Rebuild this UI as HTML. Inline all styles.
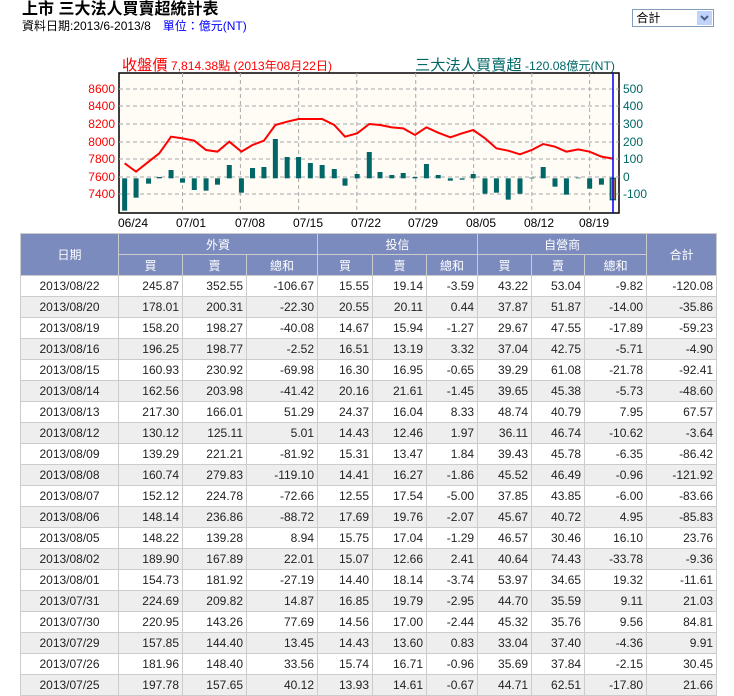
<!DOCTYPE html>
<html><head><meta charset="utf-8"><style>
body{margin:0;background:#fff;font-family:"Liberation Sans","Noto Sans CJK TC",sans-serif;width:734px;height:695px;overflow:hidden;position:relative}
.t{position:absolute;left:22px;top:0;font-size:16px;font-weight:bold;line-height:20px}
.s{position:absolute;left:22px;top:19px;font-size:12px;line-height:14px}
.s span{color:#00f;margin-left:12px}
.sel{position:absolute;left:632px;top:9px;width:80px;height:16px;border:1px solid #7f9db9;font-size:12px;line-height:16px}
.sel i{position:absolute;right:1px;top:1px;width:15px;height:14px;background:#c1d3fb;}
svg{position:absolute;left:0;top:0}
table{position:absolute;left:20px;top:233px;border-collapse:collapse;table-layout:fixed;width:697px;font-size:12px}
td,th{border:1px solid #ccc;height:20px;padding:0 3px;white-space:nowrap}
th{background:#7b8bbd;color:#fff;font-weight:normal;text-align:center}
td{text-align:right;color:#222}
td:first-child{text-align:center}
tr.g td{background:#eee}
</style></head><body>
<div class="t">上市 三大法人買賣超統計表</div>
<div class="s">資料日期:2013/6-2013/8<span>單位：億元(NT)</span></div>
<div class="sel">&nbsp;合計<i><svg width="15" height="14" style="position:static"><path d="M4 5l3.5 3.5L11 5" stroke="#4d6185" stroke-width="2" fill="none"/></svg></i></div>
<svg width="734" height="233" font-family="Liberation Sans,Noto Sans CJK TC,sans-serif">
<text x="122" y="70" fill="#f00" font-size="12" textLength="210" lengthAdjust="spacingAndGlyphs"><tspan font-size="15">收盤價</tspan> 7,814.38點 (2013年08月22日)</text>
<text x="415" y="70" fill="#006666" font-size="12" textLength="200" lengthAdjust="spacingAndGlyphs"><tspan font-size="15">三大法人買賣超</tspan> -120.08億元(NT)</text>
<rect x="119" y="73" width="500" height="140" fill="#fffbf5" stroke="#000" stroke-width="1.5"/>
<g stroke="#aaa" stroke-dasharray="4,3" stroke-width="1">
<line x1="119" x2="619" y1="89" y2="89"/><line x1="119" x2="619" y1="106" y2="106"/><line x1="119" x2="619" y1="124" y2="124"/><line x1="119" x2="619" y1="142" y2="142"/><line x1="119" x2="619" y1="159" y2="159"/><line x1="119" x2="619" y1="177" y2="177"/><line x1="119" x2="619" y1="194" y2="194"/>
<line x1="182.5" x2="182.5" y1="73" y2="213"/><line x1="240.4" x2="240.4" y1="73" y2="213"/><line x1="298.6" x2="298.6" y1="73" y2="213"/><line x1="356.8" x2="356.8" y1="73" y2="213"/><line x1="415.7" x2="415.7" y1="73" y2="213"/><line x1="473.6" x2="473.6" y1="73" y2="213"/><line x1="531.8" x2="531.8" y1="73" y2="213"/><line x1="589.6" x2="589.6" y1="73" y2="213"/>
</g>
<g fill="#f00" font-size="12" text-anchor="end">
<text x="115" y="93">8600</text><text x="115" y="110">8400</text><text x="115" y="128">8200</text><text x="115" y="146">8000</text><text x="115" y="163">7800</text><text x="115" y="181">7600</text><text x="115" y="198">7400</text></g>
<g fill="#006666" font-size="12">
<text x="623" y="93">500</text><text x="623" y="110">400</text><text x="623" y="128">300</text><text x="623" y="146">200</text><text x="623" y="163">100</text><text x="623" y="181">0</text><text x="623" y="198">-100</text></g>
<g fill="#000" font-size="12" text-anchor="middle">
<text x="133" y="227">06/24</text><text x="191" y="227">07/01</text><text x="250" y="227">07/08</text><text x="308" y="227">07/15</text><text x="366" y="227">07/22</text><text x="423" y="227">07/29</text><text x="481" y="227">08/05</text><text x="539" y="227">08/12</text><text x="594" y="227">08/19</text></g>
<g transform="translate(80,120) scale(0.35714,0.33333)" fill="#006666">
<rect x="118" y="175" width="14" height="97"/><rect x="150" y="175" width="14" height="58"/><rect x="185" y="175" width="14" height="16"/><rect x="215" y="171" width="14" height="4"/><rect x="248" y="150" width="14" height="25"/><rect x="280" y="175" width="14" height="13"/><rect x="313" y="175" width="14" height="35"/><rect x="346" y="175" width="14" height="37"/><rect x="378" y="175" width="14" height="19"/><rect x="411" y="135" width="14" height="40"/><rect x="445" y="175" width="14" height="43"/><rect x="476" y="144" width="14" height="31"/><rect x="508" y="141" width="14" height="34"/><rect x="540" y="57" width="14" height="118"/><rect x="573" y="111" width="14" height="64"/><rect x="605" y="111" width="14" height="64"/><rect x="638" y="129" width="14" height="46"/><rect x="671" y="135" width="14" height="40"/><rect x="705" y="147" width="14" height="28"/><rect x="735" y="175" width="14" height="22"/><rect x="769" y="162" width="14" height="13"/><rect x="803" y="96" width="14" height="79"/><rect x="833" y="156" width="14" height="19"/><rect x="866" y="165" width="14" height="10"/><rect x="898" y="159" width="14" height="16"/><rect x="931" y="171" width="14" height="4"/><rect x="963" y="132" width="14" height="43"/><rect x="996" y="165" width="14" height="10"/><rect x="1030" y="175" width="14" height="7"/><rect x="1063" y="175" width="14" height="4"/><rect x="1094" y="162" width="14" height="13"/><rect x="1127" y="175" width="14" height="46"/><rect x="1159" y="175" width="14" height="43"/><rect x="1192" y="175" width="14" height="64"/><rect x="1225" y="175" width="14" height="46"/><rect x="1258" y="173" width="14" height="2"/><rect x="1290" y="141" width="14" height="34"/><rect x="1323" y="175" width="14" height="25"/><rect x="1355" y="175" width="14" height="49"/><rect x="1388" y="173" width="14" height="2"/><rect x="1420" y="175" width="14" height="31"/><rect x="1453" y="175" width="14" height="19"/><rect x="1485" y="175" width="14" height="64" fill="#e07a3a" stroke="#006666" stroke-width="4"/>
<polyline fill="none" stroke="#f00" stroke-width="2" vector-effect="non-scaling-stroke" points="125,130 157,155 192,125 222,100 255,50 287,55 320,62 353,90 385,95 418,65 452,95 483,75 515,62 547,15 580,5 612,-3 645,-3 678,-3 712,15 742,50 776,40 810,12 840,15 873,22 905,25 938,45 970,22 1003,38 1037,52 1070,40 1101,30 1134,55 1166,85 1199,92 1232,103 1265,90 1297,72 1330,80 1362,95 1395,88 1427,95 1460,110 1492,116"/>
</g>
<line x1="613" x2="613" y1="73" y2="213" stroke="#00f" stroke-width="1.5"/>
</svg>
<table>
<colgroup><col style="width:98px"><col style="width:64px"><col style="width:64px"><col style="width:71px"><col style="width:55px"><col style="width:54px"><col style="width:51px"><col style="width:54px"><col style="width:53px"><col style="width:62px"><col style="width:70px"></colgroup>
<tr><th rowspan="2">日期</th><th colspan="3">外資</th><th colspan="3">投信</th><th colspan="3">自營商</th><th rowspan="2">合計</th></tr>
<tr><th>買</th><th>賣</th><th>總和</th><th>買</th><th>賣</th><th>總和</th><th>買</th><th>賣</th><th>總和</th></tr>
<tr><td>2013/08/22</td><td>245.87</td><td>352.55</td><td>-106.67</td><td>15.55</td><td>19.14</td><td>-3.59</td><td>43.22</td><td>53.04</td><td>-9.82</td><td>-120.08</td></tr>
<tr class="g"><td>2013/08/20</td><td>178.01</td><td>200.31</td><td>-22.30</td><td>20.55</td><td>20.11</td><td>0.44</td><td>37.87</td><td>51.87</td><td>-14.00</td><td>-35.86</td></tr>
<tr><td>2013/08/19</td><td>158.20</td><td>198.27</td><td>-40.08</td><td>14.67</td><td>15.94</td><td>-1.27</td><td>29.67</td><td>47.55</td><td>-17.89</td><td>-59.23</td></tr>
<tr class="g"><td>2013/08/16</td><td>196.25</td><td>198.77</td><td>-2.52</td><td>16.51</td><td>13.19</td><td>3.32</td><td>37.04</td><td>42.75</td><td>-5.71</td><td>-4.90</td></tr>
<tr><td>2013/08/15</td><td>160.93</td><td>230.92</td><td>-69.98</td><td>16.30</td><td>16.95</td><td>-0.65</td><td>39.29</td><td>61.08</td><td>-21.78</td><td>-92.41</td></tr>
<tr class="g"><td>2013/08/14</td><td>162.56</td><td>203.98</td><td>-41.42</td><td>20.16</td><td>21.61</td><td>-1.45</td><td>39.65</td><td>45.38</td><td>-5.73</td><td>-48.60</td></tr>
<tr><td>2013/08/13</td><td>217.30</td><td>166.01</td><td>51.29</td><td>24.37</td><td>16.04</td><td>8.33</td><td>48.74</td><td>40.79</td><td>7.95</td><td>67.57</td></tr>
<tr class="g"><td>2013/08/12</td><td>130.12</td><td>125.11</td><td>5.01</td><td>14.43</td><td>12.46</td><td>1.97</td><td>36.11</td><td>46.74</td><td>-10.62</td><td>-3.64</td></tr>
<tr><td>2013/08/09</td><td>139.29</td><td>221.21</td><td>-81.92</td><td>15.31</td><td>13.47</td><td>1.84</td><td>39.43</td><td>45.78</td><td>-6.35</td><td>-86.42</td></tr>
<tr class="g"><td>2013/08/08</td><td>160.74</td><td>279.83</td><td>-119.10</td><td>14.41</td><td>16.27</td><td>-1.86</td><td>45.52</td><td>46.49</td><td>-0.96</td><td>-121.92</td></tr>
<tr><td>2013/08/07</td><td>152.12</td><td>224.78</td><td>-72.66</td><td>12.55</td><td>17.54</td><td>-5.00</td><td>37.85</td><td>43.85</td><td>-6.00</td><td>-83.66</td></tr>
<tr class="g"><td>2013/08/06</td><td>148.14</td><td>236.86</td><td>-88.72</td><td>17.69</td><td>19.76</td><td>-2.07</td><td>45.67</td><td>40.72</td><td>4.95</td><td>-85.83</td></tr>
<tr><td>2013/08/05</td><td>148.22</td><td>139.28</td><td>8.94</td><td>15.75</td><td>17.04</td><td>-1.29</td><td>46.57</td><td>30.46</td><td>16.10</td><td>23.76</td></tr>
<tr class="g"><td>2013/08/02</td><td>189.90</td><td>167.89</td><td>22.01</td><td>15.07</td><td>12.66</td><td>2.41</td><td>40.64</td><td>74.43</td><td>-33.78</td><td>-9.36</td></tr>
<tr><td>2013/08/01</td><td>154.73</td><td>181.92</td><td>-27.19</td><td>14.40</td><td>18.14</td><td>-3.74</td><td>53.97</td><td>34.65</td><td>19.32</td><td>-11.61</td></tr>
<tr class="g"><td>2013/07/31</td><td>224.69</td><td>209.82</td><td>14.87</td><td>16.85</td><td>19.79</td><td>-2.95</td><td>44.70</td><td>35.59</td><td>9.11</td><td>21.03</td></tr>
<tr><td>2013/07/30</td><td>220.95</td><td>143.26</td><td>77.69</td><td>14.56</td><td>17.00</td><td>-2.44</td><td>45.32</td><td>35.76</td><td>9.56</td><td>84.81</td></tr>
<tr class="g"><td>2013/07/29</td><td>157.85</td><td>144.40</td><td>13.45</td><td>14.43</td><td>13.60</td><td>0.83</td><td>33.04</td><td>37.40</td><td>-4.36</td><td>9.91</td></tr>
<tr><td>2013/07/26</td><td>181.96</td><td>148.40</td><td>33.56</td><td>15.74</td><td>16.71</td><td>-0.96</td><td>35.69</td><td>37.84</td><td>-2.15</td><td>30.45</td></tr>
<tr class="g"><td>2013/07/25</td><td>197.78</td><td>157.65</td><td>40.12</td><td>13.93</td><td>14.61</td><td>-0.67</td><td>44.71</td><td>62.51</td><td>-17.80</td><td>21.66</td></tr>
</table>
</body></html>
